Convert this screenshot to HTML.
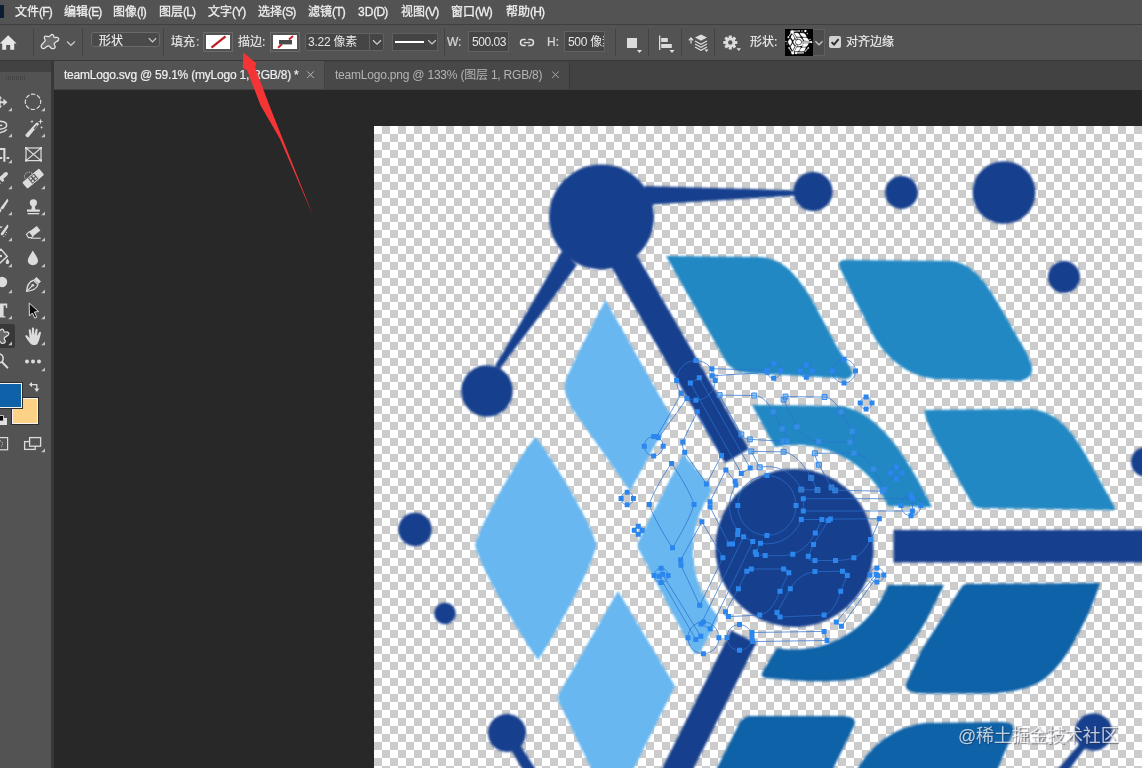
<!DOCTYPE html>
<html lang="zh-CN">
<head>
<meta charset="utf-8">
<title>teamLogo.svg @ 59.1% (myLogo 1, RGB/8) *</title>
<style>
*{box-sizing:border-box;margin:0;padding:0}
html,body{width:1142px;height:768px;overflow:hidden;background:#282828}
body{font-family:"Liberation Sans","Noto Sans CJK SC",sans-serif;font-size:12px;color:#dcdcdc}
#app{position:relative;width:1142px;height:768px;overflow:hidden;background:#282828}
#menubar,#tab1,#tab2,.lbl,.field{will-change:transform}
.abs{position:absolute}
/* menu bar */
#menubar{position:absolute;left:0;top:0;width:1142px;height:24px;background:#535353}
#menubar .mi{position:absolute;top:3.6px;height:16px;line-height:16px;white-space:nowrap;color:#f0f0f0;font-size:12px;-webkit-text-stroke:.3px #ececec}
#pslogo{position:absolute;left:0;top:5px;width:4px;height:13px;background:#0b1c33}
#menuline{position:absolute;left:0;top:24px;width:1142px;height:1px;background:#3f3f3f}
/* options bar */
#optbar{position:absolute;left:0;top:25px;width:1142px;height:35px;background:#535353}
#optline{position:absolute;left:0;top:60px;width:1142px;height:1px;background:#383838}
.vsep{position:absolute;top:29px;width:1px;height:27px;background:#424242}
.lbl{position:absolute;top:34px;height:16px;line-height:16px;white-space:nowrap;color:#e6e6e6;font-size:12px;-webkit-text-stroke:.2px #e0e0e0}
.field{position:absolute;background:#454545;border:1px solid #626262;color:#e6e6e6;font-size:12px;white-space:nowrap;overflow:hidden}
.swatch{position:absolute;border:1px solid #6a6a6a;background:#535353}
.swatch i{position:absolute;left:2px;top:2px;right:2px;bottom:2px;background:#fff;display:block}
/* tab bar */
#tabbar{position:absolute;left:0;top:61px;width:1142px;height:29px;background:#424242}
#tab1{position:absolute;left:54px;top:61px;width:270px;height:28px;background:#535353}
#tab2{position:absolute;left:325px;top:62px;width:244px;height:27px;background:#484848}
.tabtxt{position:absolute;top:6px;height:16px;line-height:16px;white-space:nowrap;font-size:12px;letter-spacing:-.21px}
#tab1 .tabtxt{color:#f0f0f0;-webkit-text-stroke:.2px #ececec}
#tab2 .tabtxt{color:#b4b4b4}
/* toolbar */
#tools{position:absolute;left:0;top:72px;width:51px;height:696px;background:#535353}
#toolsedge{position:absolute;left:51px;top:61px;width:3px;height:707px;background:#383838}
#toolshead{position:absolute;left:0;top:61px;width:51px;height:11px;background:#424242}
/* canvas */
#stage{position:absolute;left:0;top:0;width:1142px;height:768px;pointer-events:none}
#wm{position:absolute;left:958px;top:723.5px;font-size:18px;line-height:24px;color:rgba(255,255,255,.72);text-shadow:1px 1px 1px rgba(40,40,60,.55);white-space:nowrap;letter-spacing:-.2px}

#menubar .mi b.l{font-weight:normal;letter-spacing:-.85px}

</style>
</head>
<body>
<div id="app">
<div id="tabbar"></div>
<div id="menubar">
  <div id="pslogo"></div>
  <span class="mi" style="left:15px">文件<b class="l">(F)</b></span>
  <span class="mi" style="left:64px">编辑<b class="l">(E)</b></span>
  <span class="mi" style="left:113px">图像<b class="l">(I)</b></span>
  <span class="mi" style="left:159px">图层<b class="l">(L)</b></span>
  <span class="mi" style="left:208px">文字<b class="l">(Y)</b></span>
  <span class="mi" style="left:258px">选择<b class="l">(S)</b></span>
  <span class="mi" style="left:308px">滤镜<b class="l">(T)</b></span>
  <span class="mi" style="left:358px">3D<b class="l">(D)</b></span>
  <span class="mi" style="left:401px">视图<b class="l">(V)</b></span>
  <span class="mi" style="left:451px">窗口<b class="l">(W)</b></span>
  <span class="mi" style="left:506px">帮助<b class="l">(H)</b></span>
</div>
<div id="menuline"></div>
<div id="optbar"></div>
<div id="optline"></div>
<!-- home -->
<svg class="abs" style="left:0;top:34px" width="18" height="18" viewBox="0 0 18 18"><path d="M8.2 1.3 L16.6 9.4 H14.2 V15.8 H10.2 V11 H6.2 V15.8 H2.2 V9.4 H-0.2 Z" fill="#e6e6e6"/></svg>
<div class="vsep" style="left:33px"></div>
<!-- custom shape tool icon -->
<svg class="abs" style="left:40px;top:33px" width="20" height="18" viewBox="0 0 20 18"><path d="M10.9,2.1 Q12.1,0.9 12.9,1.8 Q13.8,2.6 13.9,3.7 Q14.0,4.8 15.7,4.4 Q17.4,4.0 18.2,4.9 Q19.1,5.7 18.6,6.9 Q18.0,8.0 16.3,8.8 Q14.6,9.6 14.3,10.5 Q14.0,11.4 14.8,12.5 Q15.6,13.6 15.1,14.5 Q14.6,15.4 13.4,15.6 Q12.2,15.9 11.3,15.2 Q10.4,14.6 9.8,13.6 Q9.2,12.6 8.1,12.8 Q7.0,13.0 6.0,14.2 Q5.0,15.4 3.8,15.6 Q2.6,15.7 1.8,14.8 Q0.9,13.8 1.2,12.7 Q1.6,11.6 2.8,10.5 Q4.0,9.4 4.8,8.4 Q5.6,7.4 5.0,6.5 Q4.4,5.6 4.3,4.7 Q4.2,3.8 5.0,3.3 Q5.8,2.9 6.9,3.3 Q8.0,3.8 8.8,3.6 Q9.6,3.4 10.9,2.1Z" fill="#6c6c6c" stroke="#e6e6e6" stroke-width="1.25" stroke-linejoin="round"/></svg>
<svg class="abs" style="left:66px;top:40px" width="10" height="7" viewBox="0 0 10 7"><path d="M1 1.5 L5 5.3 L9 1.5" fill="none" stroke="#c8c8c8" stroke-width="1.2"/></svg>
<div class="vsep" style="left:82px"></div>
<!-- mode dropdown -->
<div class="field" style="left:91px;top:32px;width:69px;height:15px;border-radius:3px;border-color:#6a6a6a;background:#4a4a4a"></div>
<span class="lbl" style="left:99px;top:32.5px;color:#f0f0f0">形状</span>
<svg class="abs" style="left:148px;top:37px" width="9" height="7" viewBox="0 0 9 7"><path d="M.8 1.2 L4.5 5 L8.2 1.2" fill="none" stroke="#d0d0d0" stroke-width="1.2"/></svg>
<div class="vsep" style="left:163px"></div>
<span class="lbl" style="left:171px">填充<span style="color:#9fc0e8;margin-left:1px">:</span></span>
<div class="swatch" style="left:203px;top:32px;width:30px;height:20px"><i></i>
  <svg class="abs" style="left:2px;top:2px" width="24" height="14" viewBox="0 0 24 14"><path d="M5.5 12.6 L19.5 1.4" stroke="#bd1f26" stroke-width="2.3" fill="none"/></svg></div>
<span class="lbl" style="left:238px">描边:</span>
<div class="swatch" style="left:270px;top:32px;width:30px;height:20px"><i></i>
  <svg class="abs" style="left:2px;top:2px" width="24" height="14" viewBox="0 0 24 14"><path d="M5 12.8 L9 9.2 M16 4.6 L20 1" stroke="#c8242c" stroke-width="2" fill="none"/><rect x="6" y="5" width="13" height="4.4" fill="#4a4a4a"/></svg></div>
<div class="field" style="left:305px;top:33px;width:65px;height:18px;border-radius:3px 0 0 3px;padding-left:2px;line-height:17px;letter-spacing:-.25px">3.22 像素</div>
<div class="field" style="left:369px;top:33px;width:15px;height:18px;border-radius:0 3px 3px 0"></div>
<svg class="abs" style="left:372px;top:39px" width="10" height="7" viewBox="0 0 10 7"><path d="M1 1.3 L5 5.2 L9 1.3" fill="none" stroke="#d0d0d0" stroke-width="1.2"/></svg>
<div class="field" style="left:392px;top:33px;width:46px;height:18px;border-color:#5e5e5e;background:#444"></div>
<div class="abs" style="left:395px;top:41px;width:29px;height:2px;background:#fff"></div>
<svg class="abs" style="left:427px;top:39px" width="10" height="7" viewBox="0 0 10 7"><path d="M1.2 1.3 L5 5 L8.8 1.3" fill="none" stroke="#d0d0d0" stroke-width="1.2"/></svg>
<div class="vsep" style="left:444px"></div>
<span class="lbl" style="left:447px;color:#d0d0d0">W:</span>
<div class="field" style="left:468px;top:31px;width:41px;height:21px;line-height:20px;padding-left:3px;letter-spacing:-.45px">500.03</div>
<svg class="abs" style="left:519px;top:37px" width="16" height="11" viewBox="0 0 16 11"><g fill="none" stroke="#e0e0e0" stroke-width="1.5"><path d="M6.7 2.6H4.5a3 3 0 0 0 0 6H6.7"/><path d="M9.3 2.6H11.5a3 3 0 0 1 0 6H9.3"/><path d="M4.8 5.6H11.2" stroke-width="1.3"/></g></svg>
<span class="lbl" style="left:547px;color:#d0d0d0">H:</span>
<div class="field" style="left:564px;top:31px;width:41px;height:21px;line-height:20px;padding-left:3px;letter-spacing:-.3px">500 像素</div>
<div class="vsep" style="left:615px"></div>
<div class="abs" style="left:627px;top:38px;width:10px;height:10px;background:#dcdcdc"></div>
<svg class="abs" style="left:637px;top:50px" width="5" height="3"><path d="M0 0H5L2.5 3Z" fill="#e0e0e0"/></svg>
<div class="vsep" style="left:648px"></div>
<svg class="abs" style="left:658px;top:35px" width="18" height="18" viewBox="0 0 18 18"><rect x="1" y="0.5" width="1.3" height="14.5" fill="#dcdcdc"/><rect x="3.2" y="3" width="6.6" height="4" fill="#dcdcdc"/><rect x="3.2" y="9" width="10.6" height="4" fill="#dcdcdc"/><path d="M11.5 15H16.5L14 18Z" fill="#e0e0e0"/></svg>
<div class="vsep" style="left:681px"></div>
<svg class="abs" style="left:688px;top:33px" width="22" height="20" viewBox="0 0 22 20"><path d="M3 5.2 V10.6 M.8 7.4 L3 5 L5.2 7.4" stroke="#dcdcdc" stroke-width="1.2" fill="none"/><path d="M13 1.4 L19 4.6 L13 7.8 L7 4.6 Z" fill="#dcdcdc"/><path d="M7 8 L13 11.2 L19 8 M7 11 L13 14.2 L19 11 M7 14 L13 17.2 L19 14" stroke="#dcdcdc" stroke-width="1.2" fill="none"/><path d="M16.5 16.6H20.5L18.5 19Z" fill="#e0e0e0"/></svg>
<div class="vsep" style="left:714px"></div>
<svg class="abs" style="left:722px;top:35px" width="20" height="18" viewBox="0 0 20 18"><g transform="translate(8.3 7.5)"><g fill="#dcdcdc"><rect x="-1.6" y="-7" width="3.2" height="14" rx=".6"/><rect x="-1.6" y="-7" width="3.2" height="14" rx=".6" transform="rotate(45)"/><rect x="-1.6" y="-7" width="3.2" height="14" rx=".6" transform="rotate(90)"/><rect x="-1.6" y="-7" width="3.2" height="14" rx=".6" transform="rotate(135)"/><circle r="5"/></g><circle r="2.2" fill="#535353"/></g><path d="M14.5 13.2H19L16.8 16Z" fill="#e0e0e0"/></svg>
<span class="lbl" style="left:750px;color:#f0f0f0">形状:</span>
<div class="abs" style="left:785px;top:29px;width:28px;height:27px;background:#000"></div>
<div class="abs" style="left:813px;top:29px;width:12px;height:27px;background:#4c4c4c;border:1px solid #606060;border-left:none"></div>
<svg class="abs" style="left:814px;top:40px" width="10" height="7" viewBox="0 0 10 7"><path d="M1.4 1.3 L5 4.8 L8.6 1.3" fill="none" stroke="#c4c4c4" stroke-width="1.2"/></svg>
<!-- mini logo in shape preview -->
<svg class="abs" style="left:785px;top:29px" width="28" height="27" viewBox="0 0 28 27"><g transform="matrix(0.0329 0 0 0.0312 -12.66 -4.00)" fill="#fff" stroke="#fff" stroke-width="10"><path d="M794.5,469.0 C838.1,469.0 873.5,504.4 873.5,548.0 C873.5,591.6 838.1,627.0 794.5,627.0 C750.9,627.0 715.5,591.6 715.5,548.0 C715.5,504.4 750.9,469.0 794.5,469.0 Z"/><path d="M601.5,164.6 C630.4,164.6 653.9,188.1 653.9,217 C653.9,245.9 630.4,269.4 601.5,269.4 C572.6,269.4 549.1,245.9 549.1,217 C549.1,188.1 572.6,164.6 601.5,164.6 Z"/><path d="M586.5,224.0 L724.9,463.0 L749.1,449.0 L610.7,210.0 Z"/><path d="M893.5,530 L1190,530 L1190,562.5 L893.5,562.5 Z"/><path d="M731.2,630.5 L615.5,861.7 L640.5,874.3 L756.3,643.0 Z"/><path d="M645,186 L796,190.4 L796,195.6 L645,205 Z"/><path d="M562,251 L577,265 C555,296 520,342 499.5,369 L495,365.5 C512,338 540,290 562,251 Z"/><path d="M813,172.1 C823.8,172.1 832.5,180.8 832.5,191.6 C832.5,202.4 823.8,211.1 813,211.1 C802.2,211.1 793.5,202.4 793.5,191.6 C793.5,180.8 802.2,172.1 813,172.1 Z"/><path d="M901.5,176.1 C910.6,176.1 917.9,183.4 917.9,192.5 C917.9,201.6 910.6,208.9 901.5,208.9 C892.4,208.9 885.1,201.6 885.1,192.5 C885.1,183.4 892.4,176.1 901.5,176.1 Z"/><path d="M1004,161.2 C1021.3,161.2 1035.3,175.2 1035.3,192.5 C1035.3,209.8 1021.3,223.8 1004,223.8 C986.7,223.8 972.7,209.8 972.7,192.5 C972.7,175.2 986.7,161.2 1004,161.2 Z"/><path d="M1064,261 C1072.8,261 1080,268.2 1080,277 C1080,285.8 1072.8,293 1064,293 C1055.2,293 1048,285.8 1048,277 C1048,268.2 1055.2,261 1064,261 Z"/><path d="M1146,447 C1154.3,447 1161,453.7 1161,462 C1161,470.3 1154.3,477 1146,477 C1137.7,477 1131,470.3 1131,462 C1131,453.7 1137.7,447 1146,447 Z"/><path d="M487,365.3 C501.2,365.3 512.7,376.8 512.7,391 C512.7,405.2 501.2,416.7 487,416.7 C472.8,416.7 461.3,405.2 461.3,391 C461.3,376.8 472.8,365.3 487,365.3 Z"/><path d="M415,512.8 C424.2,512.8 431.7,520.3 431.7,529.5 C431.7,538.7 424.2,546.2 415,546.2 C405.8,546.2 398.3,538.7 398.3,529.5 C398.3,520.3 405.8,512.8 415,512.8 Z"/><path d="M445,602.8 C450.9,602.8 455.7,607.6 455.7,613.5 C455.7,619.4 450.9,624.2 445,624.2 C439.1,624.2 434.3,619.4 434.3,613.5 C434.3,607.6 439.1,602.8 445,602.8 Z"/><path d="M507,714 C517.5,714 526,722.5 526,733 C526,743.5 517.5,752 507,752 C496.5,752 488,743.5 488,733 C488,722.5 496.5,714 507,714 Z"/><path d="M1093.5,713.25 C1103.9,713.25 1112.25,721.6 1112.25,732 C1112.25,742.4 1103.9,750.75 1093.5,750.75 C1083.1,750.75 1074.75,742.4 1074.75,732 C1074.75,721.6 1083.1,713.25 1093.5,713.25 Z"/><path d="M502.3,735.2 L601.2,902.2 L614.8,893.8 L510.7,730.0 Z"/><path d="M1091.4,730.3 L983.0,856.4 L997.0,867.6 L1095.6,733.7 Z"/><path d="M720,863 C738.8,863 754,878.2 754,897 C754,915.8 738.8,931 720,931 C701.2,931 686,915.8 686,897 C686,878.2 701.2,863 720,863 Z"/><path d="M754,884 L950,881 L958,905 L756,908 Z"/><path d="M622,856 C645.2,856 664,874.8 664,898 C664,921.2 645.2,940 622,940 C598.8,940 580,921.2 580,898 C580,874.8 598.8,856 622,856 Z"/><path d="M1186,521 C1200.9,521 1213,533.1 1213,548 C1213,562.9 1200.9,575 1186,575 C1171.1,575 1159,562.9 1159,548 C1159,533.1 1171.1,521 1186,521 Z"/><path d="M666,256 L760,257 C785,259 797,276 812,300 L836,345 C846,362 858,374 849,378 C845,380 842,378 838,378 L748,373 C736,372 730,368 725,360 Z"/><path d="M845,260 L951,261 C972,263 985,282 996,300 L1026,352 C1033,366 1037,377 1020,381 L935,379 C905,375 888,358 876,340 C866,322 850,290 840,268 C838,263 840,260 845,260 Z"/><path d="M752,405 L840,406 C870,410 895,440 915,475 L932,507 L888,506 A100,100 0 0 0 775,447 Z"/><path d="M925,410 L1031,409 C1058,412 1072,432 1084,452 L1114,506 C1116,510 1114,511 1110,510 L980,508 C975,508 973,505 970,500 L936,440 C930,428 924,416 925,410 Z"/><path d="M605.5,300 L671,416 L630,491 L571,407 C566,396 563,388 566,380 C571,366 590,330 605.5,300 Z"/><path d="M683,454 L708,484 C712,488 712,490 710,494 A100,100 0 0 0 716,614 C718,618 717,621 715,625 L701,650 C698,655 695,655 692,650 L640,552 C637,546 637,544 640,538 Z"/><path d="M535.5,437 C550,455 590,520 596.5,545 C590,572 555,634 538,660 C520,634 482,572 475,545 C482,520 520,455 535.5,437 Z"/><path d="M618,591 L675,686 L612,812 L561,706 C557,699 557,697 560,692 Z"/><path d="M888,585 L944,585 L926,621 C910,650 890,668 865,677 C845,682 815,682 790,680 L766,678 C761,677 761,675 763,671 L777,648 A100,100 0 0 0 888,585 Z"/><path d="M967,584 L1100,583 C1095,600 1085,622 1076,638 C1062,664 1048,680 1031,686 C1015,692 1000,693 981,693.5 L925,693.5 C910,693 903,690 907,682 L921,651 L961,588 C962,586 964,584 967,584 Z"/><path d="M752,716 L840,716 C852,716 857,719 854,726 L830,775 C815,810 800,834 775,838 L690,842 C680,842 678,836 682,829 L717,768 L740,722 C744,717 747,716 752,716 Z"/><path d="M925,723 L1000,722 C1012,722 1016,726 1013,733 L995,775 C985,808 970,832 950,838 L830,843 C820,843 818,837 822,831 L858,768 C870,748 890,728 925,723 Z"/></g></svg>
<!-- checkbox -->
<div class="abs" style="left:829px;top:36px;width:12px;height:12px;background:#d2d2d2;border-radius:2px"></div>
<svg class="abs" style="left:829px;top:36px" width="12" height="12" viewBox="0 0 12 12"><path d="M2.6 6.2 L5 8.6 L9.6 3.2" fill="none" stroke="#2a2a2a" stroke-width="1.9"/></svg>
<span class="lbl" style="left:846px;color:#f0f0f0">对齐边缘</span>
<!-- tabs -->
<div id="tab1"><span class="tabtxt" style="left:10px">teamLogo.svg @ 59.1% (myLogo 1, RGB/8) *</span>
  <svg class="abs" style="left:252px;top:9px" width="9" height="9" viewBox="0 0 9 9"><path d="M1.2 1.4L7.8 8M7.8 1.4L1.2 8" stroke="#b8b8b8" stroke-width="1"/></svg></div>
<div id="tab2"><span class="tabtxt" style="left:10px;top:5px">teamLogo.png @ 133% (图层 1, RGB/8)</span>
  <svg class="abs" style="left:226px;top:8px" width="9" height="9" viewBox="0 0 9 9"><path d="M1.2 1.4L7.8 8M7.8 1.4L1.2 8" stroke="#a8a8a8" stroke-width="1"/></svg></div>
<div class="abs" style="left:569px;top:62px;width:1px;height:27px;background:#383838"></div>

<div id="toolshead"></div>
<div id="tools"></div>
<div id="toolsedge"></div>
<svg class="abs" style="left:0;top:0" width="54" height="768" viewBox="0 0 54 768">
  <!-- grip -->
  <g fill="#454545"><rect x="6" y="76" width="1" height="4"/><rect x="8" y="76" width="1" height="4"/><rect x="10" y="76" width="1" height="4"/><rect x="12" y="76" width="1" height="4"/><rect x="14" y="76" width="1" height="4"/><rect x="16" y="76" width="1" height="4"/><rect x="18" y="76" width="1" height="4"/><rect x="20" y="76" width="1" height="4"/><rect x="22" y="76" width="1" height="4"/><rect x="24" y="76" width="1" height="4"/></g>
  <!-- selected tool bg -->
  <rect x="-2" y="324" width="17" height="24" rx="2" fill="#383838"/>
  <!-- corner flyout triangles -->
  <g fill="#c4c4c4">
    <path d="M45 107.5V111.3H41.2Z"/><path d="M45 133.5V137.3H41.2Z"/><path d="M45 185.5V189.3H41.2Z"/><path d="M45 211.5V215.3H41.2Z"/><path d="M45 237.5V241.3H41.2Z"/><path d="M45 263.5V267.3H41.2Z"/><path d="M45 289.5V293.3H41.2Z"/><path d="M45 315.5V319.3H41.2Z"/><path d="M45 341.5V345.3H41.2Z"/><path d="M45 367.5V371.3H41.2Z"/><path d="M45 448.5V452.3H41.2Z"/>
    <path d="M12 107.5V111.3H8.2Z"/><path d="M12 133.5V137.3H8.2Z"/><path d="M12 159.5V163.3H8.2Z"/><path d="M12 185.5V189.3H8.2Z"/><path d="M12 211.5V215.3H8.2Z"/><path d="M12 237.5V241.3H8.2Z"/><path d="M12 263.5V267.3H8.2Z"/><path d="M12 289.5V293.3H8.2Z"/><path d="M12 315.5V319.3H8.2Z"/><path d="M12 341.5V345.3H8.2Z"/>
  </g>
  <!-- ===== left column (clipped) ===== -->
  <g fill="#dcdcdc" stroke="none">
    <!-- move -->
    <path d="M-2 101.2H3.4V98.6L7.4 102.2L3.4 105.8V103.2H-2Z M-.2 95.6L2 98.6H.6V105.8H2L-.2 108.8L-2.4 105.8H-1V98.6H-2.4Z"/>
    <!-- crop -->
    <path d="M-3 148H5.4V161.8H3.3V150H-3Z M-3 157H2.2V159H-3Z M6.6 157H9.2V159H6.6Z"/>
    <!-- type T -->
    <path d="M-4 303.5H7.2V308H5.8V305.5H3.6V316.2H5.4V317.6H-2V316.2H0V305.5H-4Z"/>
  </g>
  <!-- lasso -->
  <g fill="none" stroke="#dcdcdc" stroke-width="1.5"><path d="M-3 121.6 C2 120.6 6.4 122 6.6 125 C6.8 128 2 129.6 -3 129.4"/><path d="M-3 125.4H2.2"/><path d="M-3 133.4 C1 132.8 5 131.4 6.8 129.4"/></g>
  <!-- eyedropper -->
  <g fill="#dcdcdc"><path d="M4.2 172.8 C5.4 171.6 7.2 171.8 7.8 173 C8.4 174.2 7.4 175.4 6.4 176.2 L3.2 179 L4.4 180.4 L2.6 182 L-3 177 L-1.2 175.4 L.4 176.6 Z"/><path d="M-4 180 L1 183 L-3 187.4Z"/></g>
  <!-- brush -->
  <path d="M7.4 198.8 C8.4 199.2 8.6 200.6 8 201.6 L3.4 208.8 C2.4 210 .2 208.8 .8 207.4 Z M.4 208.6 C1.6 209.6 1.8 211 .6 212 C-.8 213.2 -3 213 -4 212.6 L-4 208.6Z" fill="#dcdcdc"/>
  <!-- history brush -->
  <path d="M7.4 224.6 C8.4 225 8.6 226.4 8 227.4 L3.2 234.8 C2.2 236 .2 234.8 .8 233.4 Z M-4 226.8 L2.6 226.2 L1.6 227.8 L-4 228.4Z" fill="#dcdcdc"/>
  <g fill="#c8c8c8"><circle cx="6.4" cy="232.4" r=".6"/><circle cx="5.6" cy="234.6" r=".6"/><circle cx="3.8" cy="236.4" r=".6"/></g>
  <!-- paint bucket -->
  <g><path d="M-3 252.6 L1 249.2 L7.2 256.4 L-1 264 L-4 261" fill="none" stroke="#dcdcdc" stroke-width="1.5"/><circle cx=".8" cy="256" r="1.3" fill="#dcdcdc"/><path d="M7.4 258.6 C8.6 260.4 9.4 261.4 9.2 262.6 C9 263.8 7.8 264.4 6.8 264 C5.6 263.6 5.6 262 6 261 Z" fill="#dcdcdc"/></g>
  <!-- dodge -->
  <circle cx="2" cy="282" r="5.2" fill="#dcdcdc"/>
  <!-- custom shape (selected) -->
  <path d="M0.9,329.8 Q2.1,328.5 3.0,329.4 Q3.8,330.2 3.9,331.3 Q4.0,332.4 5.7,332.0 Q7.4,331.6 8.3,332.5 Q9.1,333.3 8.6,334.5 Q8.0,335.6 6.3,336.4 Q4.6,337.2 4.3,338.1 Q4.0,339.0 4.8,340.1 Q5.6,341.2 5.1,342.1 Q4.6,343.0 3.4,343.2 Q2.2,343.5 1.3,342.9 Q0.4,342.2 -0.2,341.2 Q-0.8,340.2 -1.9,340.4 Q-3.0,340.6 -4.0,341.8 Q-5.0,343.0 -6.2,343.1 Q-7.4,343.3 -8.2,342.4 Q-9.1,341.4 -8.7,340.3 Q-8.4,339.2 -7.2,338.1 Q-6.0,337.0 -5.2,336.0 Q-4.4,335.0 -5.0,334.1 Q-5.6,333.2 -5.7,332.3 Q-5.8,331.4 -5.0,331.0 Q-4.2,330.5 -3.1,331.0 Q-2.0,331.4 -1.2,331.2 Q-0.4,331.0 0.9,329.8Z" fill="#686868" stroke="#e0e0e0" stroke-width="1.25" stroke-linejoin="round"/>
  <!-- zoom -->
  <g fill="none" stroke="#dcdcdc"><circle cx="-1.4" cy="358.4" r="4.6" stroke-width="1.5"/><path d="M2.2 362.2 L7.4 367.6" stroke-width="2" stroke-linecap="round"/></g>
  <!-- ===== right column ===== -->
  <!-- elliptical marquee -->
  <circle cx="33" cy="101.8" r="7.7" fill="none" stroke="#dcdcdc" stroke-width="1.2" stroke-dasharray="4.4 1.65" stroke-dashoffset="2.2"/>
  <!-- magic wand -->
  <g fill="#dcdcdc"><path d="M36.2 122.8 C37.4 121.8 39.6 123.6 38.6 124.8 L28.6 137 C27.4 138.2 24.6 135.8 25.6 134.6 Z"/><path d="M36.4 125 L37.4 125.8 L34.6 129.2 L33.6 128.4Z" fill="#535353"/><path d="M32 119.6 L32.5 121.2 L34 121.6 L32.5 122 L32 123.6 L31.5 122 L30 121.6 L31.5 121.2Z"/><path d="M40.6 118.6 L41.3 120.9 L43.4 121.5 L41.3 122.1 L40.6 124.4 L39.9 122.1 L37.8 121.5 L39.9 120.9Z"/><path d="M41.6 125.6 L42 127 L43.4 127.4 L42 127.8 L41.6 129.2 L41.2 127.8 L39.8 127.4 L41.2 127Z"/></g>
  <!-- frame tool -->
  <g fill="none" stroke="#dcdcdc" stroke-width="1.2"><rect x="26" y="148" width="15" height="12.6"/><path d="M26 148 L41 160.6 M41 148 L26 160.6"/></g>
  <g fill="#dcdcdc"><rect x="25" y="147" width="2.2" height="2.2"/><rect x="39.8" y="147" width="2.2" height="2.2"/><rect x="25" y="159.4" width="2.2" height="2.2"/><rect x="39.8" y="159.4" width="2.2" height="2.2"/></g>
  <!-- healing brush (band-aid) -->
  <g transform="translate(33.2 178.6) rotate(-40)"><rect x="-11" y="-4.1" width="22" height="8.2" rx="1.3" fill="#dcdcdc"/><rect x="-4.3" y="-4.1" width="8.6" height="8.2" fill="#535353"/><rect x="-4.3" y="-3.7" width="8.6" height="7.4" fill="none" stroke="#dcdcdc" stroke-width=".9"/><g fill="#dcdcdc"><rect x="-2.9" y="-2.7" width="2.1" height="2.1"/><rect x=".8" y="-2.7" width="2.1" height="2.1"/><rect x="-2.9" y=".6" width="2.1" height="2.1"/><rect x=".8" y=".6" width="2.1" height="2.1"/></g></g>
  <path d="M25.2 178.6 A4.2 4.2 0 1 1 32.6 174.2" fill="none" stroke="#dcdcdc" stroke-width="1" stroke-dasharray="1 1.2"/>
  <rect x="26" y="176" width="8" height="6" fill="#535353" transform="rotate(-40 30 179)" opacity="0"/>
  <!-- clone stamp -->
  <g fill="#dcdcdc"><circle cx="33.4" cy="202.8" r="3.6"/><path d="M32 205 H34.8 L35.4 209.4 H39.8 V211.8 H27 V209.4 H31.4 Z"/><rect x="27.6" y="213" width="11.6" height="1.3"/></g>
  <!-- eraser -->
  <g><path d="M36.8 226 L40.4 230.6 L33 236.2 L29.4 231.6 Z" fill="#dcdcdc"/><path d="M29.4 231.6 L33 236.2 L31.4 237.6 H28.4 L26.4 234.4 Z" fill="none" stroke="#dcdcdc" stroke-width="1.1"/><path d="M31 238.2 H40.8" stroke="#dcdcdc" stroke-width="1.1"/></g>
  <!-- blur drop -->
  <path d="M32.8 250.4 C34.6 254 38 257.6 38 260.6 C38 263.4 35.8 265.2 32.8 265.2 C29.8 265.2 27.8 263.4 27.8 260.6 C27.8 257.6 31 254 32.8 250.4 Z" fill="#dcdcdc"/>
  <!-- pen -->
  <g><path d="M36.4 277 L41 281.4 L38.6 283.8 L34 279.4 Z" fill="#dcdcdc"/><path d="M33.6 280.2 L38 284.6 C36.8 288.6 32.8 290.6 26.6 291.4 C27 285.6 29.4 281.6 33.6 280.2 Z" fill="none" stroke="#dcdcdc" stroke-width="1.3" stroke-linejoin="round"/><path d="M26.8 291.2 L32.2 285.8" stroke="#dcdcdc" stroke-width="1.1"/><circle cx="32.8" cy="285.2" r="1.3" fill="#dcdcdc"/></g>
  <!-- path selection arrow -->
  <path d="M29.2 303 L38.6 311.6 L34.4 312 L36.8 317.2 L34.8 318.2 L32.4 313 L29.4 316 Z" fill="#0c0c0c" stroke="#dcdcdc" stroke-width="1" stroke-linejoin="round"/>
  <!-- hand -->
  <path d="M30.4 343.4 C28.6 341.6 26.4 338.4 25.4 336.6 C24.8 335.4 26.2 334.6 27.2 335.6 L29.6 338.2 L28.8 330.4 C28.7 329 30.5 328.8 30.8 330.2 L31.8 335.2 L31.9 328.6 C31.9 327.2 33.9 327.2 34 328.6 L34.4 335.2 L35.6 329.6 C35.9 328.3 37.7 328.6 37.6 330 L37 336 L39 332.4 C39.7 331.2 41.3 332 40.9 333.3 C40 336.4 39.6 340 37.6 343.4 C36.2 345.4 32.4 345.4 30.4 343.4 Z" fill="#dcdcdc"/>
  <!-- dots -->
  <g fill="#dcdcdc"><circle cx="27" cy="361.6" r="2"/><circle cx="33" cy="361.6" r="2"/><circle cx="39" cy="361.6" r="2"/></g>
  <!-- swap arrows -->
  <g fill="none" stroke="#dcdcdc" stroke-width="1.3"><path d="M30.4 384.6 H36.8 V390"/></g>
  <path d="M29 384.6 L32 382 V387.2Z M36.8 392 L34.2 388.6 H39.4Z" fill="#dcdcdc"/>
  <!-- background swatch -->
  <rect x="12.5" y="398.5" width="25" height="25" fill="#fdd287" stroke="#f4f4f4" stroke-width="1"/>
  <rect x="11.5" y="397.5" width="27" height="27" fill="none" stroke="#2e2e2e" stroke-width="1"/>
  <!-- foreground swatch -->
  <rect x="-3.5" y="383.5" width="25" height="24" fill="#0f62a8" stroke="#f4f4f4" stroke-width="1"/>
  <rect x="-4.5" y="382.5" width="27" height="26" fill="none" stroke="#2e2e2e" stroke-width="1"/>
  <!-- default colors mini -->
  <rect x="-2" y="418" width="9" height="7" fill="#e0e0e0"/><rect x="-3" y="415.6" width="6.4" height="5.4" fill="#0a0a0a" stroke="#e0e0e0" stroke-width=".8"/>
  <!-- quick mask -->
  <rect x="-3" y="437.6" width="10.6" height="12.2" fill="none" stroke="#dcdcdc" stroke-width="1.2"/><circle cx="-.6" cy="443.8" r="3.2" fill="none" stroke="#dcdcdc" stroke-width="1" stroke-dasharray="1 1.2"/>
  <!-- screen mode -->
  <g fill="#535353" stroke="#dcdcdc" stroke-width="1.3"><rect x="24.6" y="441.6" width="10.6" height="7.8"/><rect x="29.6" y="437.6" width="11" height="8.6"/></g>
</svg>

<svg id="stage" width="1142" height="768" viewBox="0 0 1142 768">
<defs><pattern id="chk" x="374" y="126" width="16" height="16" patternUnits="userSpaceOnUse"><rect width="16" height="16" fill="#fff"/><rect x="8" width="8" height="8" fill="#ccc"/><rect y="8" width="8" height="8" fill="#ccc"/></pattern><clipPath id="cv"><rect x="374" y="126" width="768" height="642"/></clipPath><filter id="soft" x="-2%" y="-2%" width="104%" height="104%"><feGaussianBlur stdDeviation="1.15"/></filter></defs>
<rect x="374" y="126" width="768" height="642" fill="url(#chk)"/>
<g clip-path="url(#cv)"><g filter="url(#soft)">
<path d="M794.5,469.0 C838.1,469.0 873.5,504.4 873.5,548.0 C873.5,591.6 838.1,627.0 794.5,627.0 C750.9,627.0 715.5,591.6 715.5,548.0 C715.5,504.4 750.9,469.0 794.5,469.0 Z" fill="#173f8e"/>
<path d="M601.5,164.6 C630.4,164.6 653.9,188.1 653.9,217 C653.9,245.9 630.4,269.4 601.5,269.4 C572.6,269.4 549.1,245.9 549.1,217 C549.1,188.1 572.6,164.6 601.5,164.6 Z" fill="#173f8e"/>
<path d="M586.5,224.0 L724.9,463.0 L749.1,449.0 L610.7,210.0 Z" fill="#173f8e"/>
<path d="M893.5,530 L1190,530 L1190,562.5 L893.5,562.5 Z" fill="#173f8e"/>
<path d="M731.2,630.5 L615.5,861.7 L640.5,874.3 L756.3,643.0 Z" fill="#173f8e"/>
<path d="M645,186 L796,190.4 L796,195.6 L645,205 Z" fill="#173f8e"/>
<path d="M562,251 L577,265 C555,296 520,342 499.5,369 L495,365.5 C512,338 540,290 562,251 Z" fill="#173f8e"/>
<path d="M813,172.1 C823.8,172.1 832.5,180.8 832.5,191.6 C832.5,202.4 823.8,211.1 813,211.1 C802.2,211.1 793.5,202.4 793.5,191.6 C793.5,180.8 802.2,172.1 813,172.1 Z" fill="#173f8e"/>
<path d="M901.5,176.1 C910.6,176.1 917.9,183.4 917.9,192.5 C917.9,201.6 910.6,208.9 901.5,208.9 C892.4,208.9 885.1,201.6 885.1,192.5 C885.1,183.4 892.4,176.1 901.5,176.1 Z" fill="#173f8e"/>
<path d="M1004,161.2 C1021.3,161.2 1035.3,175.2 1035.3,192.5 C1035.3,209.8 1021.3,223.8 1004,223.8 C986.7,223.8 972.7,209.8 972.7,192.5 C972.7,175.2 986.7,161.2 1004,161.2 Z" fill="#173f8e"/>
<path d="M1064,261 C1072.8,261 1080,268.2 1080,277 C1080,285.8 1072.8,293 1064,293 C1055.2,293 1048,285.8 1048,277 C1048,268.2 1055.2,261 1064,261 Z" fill="#173f8e"/>
<path d="M1146,447 C1154.3,447 1161,453.7 1161,462 C1161,470.3 1154.3,477 1146,477 C1137.7,477 1131,470.3 1131,462 C1131,453.7 1137.7,447 1146,447 Z" fill="#173f8e"/>
<path d="M487,365.3 C501.2,365.3 512.7,376.8 512.7,391 C512.7,405.2 501.2,416.7 487,416.7 C472.8,416.7 461.3,405.2 461.3,391 C461.3,376.8 472.8,365.3 487,365.3 Z" fill="#173f8e"/>
<path d="M415,512.8 C424.2,512.8 431.7,520.3 431.7,529.5 C431.7,538.7 424.2,546.2 415,546.2 C405.8,546.2 398.3,538.7 398.3,529.5 C398.3,520.3 405.8,512.8 415,512.8 Z" fill="#173f8e"/>
<path d="M445,602.8 C450.9,602.8 455.7,607.6 455.7,613.5 C455.7,619.4 450.9,624.2 445,624.2 C439.1,624.2 434.3,619.4 434.3,613.5 C434.3,607.6 439.1,602.8 445,602.8 Z" fill="#173f8e"/>
<path d="M507,714 C517.5,714 526,722.5 526,733 C526,743.5 517.5,752 507,752 C496.5,752 488,743.5 488,733 C488,722.5 496.5,714 507,714 Z" fill="#173f8e"/>
<path d="M1093.5,713.25 C1103.9,713.25 1112.25,721.6 1112.25,732 C1112.25,742.4 1103.9,750.75 1093.5,750.75 C1083.1,750.75 1074.75,742.4 1074.75,732 C1074.75,721.6 1083.1,713.25 1093.5,713.25 Z" fill="#173f8e"/>
<path d="M502.3,735.2 L601.2,902.2 L614.8,893.8 L510.7,730.0 Z" fill="#173f8e"/>
<path d="M1091.4,730.3 L983.0,856.4 L997.0,867.6 L1095.6,733.7 Z" fill="#173f8e"/>
<path d="M720,863 C738.8,863 754,878.2 754,897 C754,915.8 738.8,931 720,931 C701.2,931 686,915.8 686,897 C686,878.2 701.2,863 720,863 Z" fill="#173f8e"/>
<path d="M754,884 L950,881 L958,905 L756,908 Z" fill="#173f8e"/>
<path d="M622,856 C645.2,856 664,874.8 664,898 C664,921.2 645.2,940 622,940 C598.8,940 580,921.2 580,898 C580,874.8 598.8,856 622,856 Z" fill="#173f8e"/>
<path d="M1186,521 C1200.9,521 1213,533.1 1213,548 C1213,562.9 1200.9,575 1186,575 C1171.1,575 1159,562.9 1159,548 C1159,533.1 1171.1,521 1186,521 Z" fill="#173f8e"/>
<path d="M666,256 L760,257 C785,259 797,276 812,300 L836,345 C846,362 858,374 849,378 C845,380 842,378 838,378 L748,373 C736,372 730,368 725,360 Z" fill="#2088c4"/>
<path d="M845,260 L951,261 C972,263 985,282 996,300 L1026,352 C1033,366 1037,377 1020,381 L935,379 C905,375 888,358 876,340 C866,322 850,290 840,268 C838,263 840,260 845,260 Z" fill="#2088c4"/>
<path d="M752,405 L840,406 C870,410 895,440 915,475 L932,507 L888,506 A100,100 0 0 0 775,447 Z" fill="#2088c4"/>
<path d="M925,410 L1031,409 C1058,412 1072,432 1084,452 L1114,506 C1116,510 1114,511 1110,510 L980,508 C975,508 973,505 970,500 L936,440 C930,428 924,416 925,410 Z" fill="#2088c4"/>
<path d="M605.5,300 L671,416 L630,491 L571,407 C566,396 563,388 566,380 C571,366 590,330 605.5,300 Z" fill="#67b7f0"/>
<path d="M683,454 L708,484 C712,488 712,490 710,494 A100,100 0 0 0 716,614 C718,618 717,621 715,625 L701,650 C698,655 695,655 692,650 L640,552 C637,546 637,544 640,538 Z" fill="#67b7f0"/>
<path d="M535.5,437 C550,455 590,520 596.5,545 C590,572 555,634 538,660 C520,634 482,572 475,545 C482,520 520,455 535.5,437 Z" fill="#67b7f0"/>
<path d="M618,591 L675,686 L612,812 L561,706 C557,699 557,697 560,692 Z" fill="#67b7f0"/>
<path d="M888,585 L944,585 L926,621 C910,650 890,668 865,677 C845,682 815,682 790,680 L766,678 C761,677 761,675 763,671 L777,648 A100,100 0 0 0 888,585 Z" fill="#1062a8"/>
<path d="M967,584 L1100,583 C1095,600 1085,622 1076,638 C1062,664 1048,680 1031,686 C1015,692 1000,693 981,693.5 L925,693.5 C910,693 903,690 907,682 L921,651 L961,588 C962,586 964,584 967,584 Z" fill="#1062a8"/>
<path d="M752,716 L840,716 C852,716 857,719 854,726 L830,775 C815,810 800,834 775,838 L690,842 C680,842 678,836 682,829 L717,768 L740,722 C744,717 747,716 752,716 Z" fill="#1062a8"/>
<path d="M925,723 L1000,722 C1012,722 1016,726 1013,733 L995,775 C985,808 970,832 950,838 L830,843 C820,843 818,837 822,831 L858,768 C870,748 890,728 925,723 Z" fill="#1062a8"/>
</g>
<g transform="matrix(0.368 0 0 0.378 474.52 298.36)" fill="none" stroke="#2a6fd0" stroke-width="0.8" stroke-opacity=".9">
<path d="M794.5,469.0 C838.1,469.0 873.5,504.4 873.5,548.0 C873.5,591.6 838.1,627.0 794.5,627.0 C750.9,627.0 715.5,591.6 715.5,548.0 C715.5,504.4 750.9,469.0 794.5,469.0 Z" vector-effect="non-scaling-stroke"/>
<path d="M601.5,164.6 C630.4,164.6 653.9,188.1 653.9,217 C653.9,245.9 630.4,269.4 601.5,269.4 C572.6,269.4 549.1,245.9 549.1,217 C549.1,188.1 572.6,164.6 601.5,164.6 Z" vector-effect="non-scaling-stroke"/>
<path d="M586.5,224.0 L724.9,463.0 L749.1,449.0 L610.7,210.0 Z" vector-effect="non-scaling-stroke"/>
<path d="M893.5,530 L1190,530 L1190,562.5 L893.5,562.5 Z" vector-effect="non-scaling-stroke"/>
<path d="M731.2,630.5 L615.5,861.7 L640.5,874.3 L756.3,643.0 Z" vector-effect="non-scaling-stroke"/>
<path d="M645,186 L796,190.4 L796,195.6 L645,205 Z" vector-effect="non-scaling-stroke"/>
<path d="M562,251 L577,265 C555,296 520,342 499.5,369 L495,365.5 C512,338 540,290 562,251 Z" vector-effect="non-scaling-stroke"/>
<path d="M813,172.1 C823.8,172.1 832.5,180.8 832.5,191.6 C832.5,202.4 823.8,211.1 813,211.1 C802.2,211.1 793.5,202.4 793.5,191.6 C793.5,180.8 802.2,172.1 813,172.1 Z" vector-effect="non-scaling-stroke"/>
<path d="M901.5,176.1 C910.6,176.1 917.9,183.4 917.9,192.5 C917.9,201.6 910.6,208.9 901.5,208.9 C892.4,208.9 885.1,201.6 885.1,192.5 C885.1,183.4 892.4,176.1 901.5,176.1 Z" vector-effect="non-scaling-stroke"/>
<path d="M1004,161.2 C1021.3,161.2 1035.3,175.2 1035.3,192.5 C1035.3,209.8 1021.3,223.8 1004,223.8 C986.7,223.8 972.7,209.8 972.7,192.5 C972.7,175.2 986.7,161.2 1004,161.2 Z" vector-effect="non-scaling-stroke"/>
<path d="M1064,261 C1072.8,261 1080,268.2 1080,277 C1080,285.8 1072.8,293 1064,293 C1055.2,293 1048,285.8 1048,277 C1048,268.2 1055.2,261 1064,261 Z" vector-effect="non-scaling-stroke"/>
<path d="M1146,447 C1154.3,447 1161,453.7 1161,462 C1161,470.3 1154.3,477 1146,477 C1137.7,477 1131,470.3 1131,462 C1131,453.7 1137.7,447 1146,447 Z" vector-effect="non-scaling-stroke"/>
<path d="M487,365.3 C501.2,365.3 512.7,376.8 512.7,391 C512.7,405.2 501.2,416.7 487,416.7 C472.8,416.7 461.3,405.2 461.3,391 C461.3,376.8 472.8,365.3 487,365.3 Z" vector-effect="non-scaling-stroke"/>
<path d="M415,512.8 C424.2,512.8 431.7,520.3 431.7,529.5 C431.7,538.7 424.2,546.2 415,546.2 C405.8,546.2 398.3,538.7 398.3,529.5 C398.3,520.3 405.8,512.8 415,512.8 Z" vector-effect="non-scaling-stroke"/>
<path d="M445,602.8 C450.9,602.8 455.7,607.6 455.7,613.5 C455.7,619.4 450.9,624.2 445,624.2 C439.1,624.2 434.3,619.4 434.3,613.5 C434.3,607.6 439.1,602.8 445,602.8 Z" vector-effect="non-scaling-stroke"/>
<path d="M507,714 C517.5,714 526,722.5 526,733 C526,743.5 517.5,752 507,752 C496.5,752 488,743.5 488,733 C488,722.5 496.5,714 507,714 Z" vector-effect="non-scaling-stroke"/>
<path d="M1093.5,713.25 C1103.9,713.25 1112.25,721.6 1112.25,732 C1112.25,742.4 1103.9,750.75 1093.5,750.75 C1083.1,750.75 1074.75,742.4 1074.75,732 C1074.75,721.6 1083.1,713.25 1093.5,713.25 Z" vector-effect="non-scaling-stroke"/>
<path d="M502.3,735.2 L601.2,902.2 L614.8,893.8 L510.7,730.0 Z" vector-effect="non-scaling-stroke"/>
<path d="M1091.4,730.3 L983.0,856.4 L997.0,867.6 L1095.6,733.7 Z" vector-effect="non-scaling-stroke"/>
<path d="M720,863 C738.8,863 754,878.2 754,897 C754,915.8 738.8,931 720,931 C701.2,931 686,915.8 686,897 C686,878.2 701.2,863 720,863 Z" vector-effect="non-scaling-stroke"/>
<path d="M754,884 L950,881 L958,905 L756,908 Z" vector-effect="non-scaling-stroke"/>
<path d="M622,856 C645.2,856 664,874.8 664,898 C664,921.2 645.2,940 622,940 C598.8,940 580,921.2 580,898 C580,874.8 598.8,856 622,856 Z" vector-effect="non-scaling-stroke"/>
<path d="M1186,521 C1200.9,521 1213,533.1 1213,548 C1213,562.9 1200.9,575 1186,575 C1171.1,575 1159,562.9 1159,548 C1159,533.1 1171.1,521 1186,521 Z" vector-effect="non-scaling-stroke"/>
<path d="M666,256 L760,257 C785,259 797,276 812,300 L836,345 C846,362 858,374 849,378 C845,380 842,378 838,378 L748,373 C736,372 730,368 725,360 Z" vector-effect="non-scaling-stroke"/>
<path d="M845,260 L951,261 C972,263 985,282 996,300 L1026,352 C1033,366 1037,377 1020,381 L935,379 C905,375 888,358 876,340 C866,322 850,290 840,268 C838,263 840,260 845,260 Z" vector-effect="non-scaling-stroke"/>
<path d="M752,405 L840,406 C870,410 895,440 915,475 L932,507 L888,506 A100,100 0 0 0 775,447 Z" vector-effect="non-scaling-stroke"/>
<path d="M925,410 L1031,409 C1058,412 1072,432 1084,452 L1114,506 C1116,510 1114,511 1110,510 L980,508 C975,508 973,505 970,500 L936,440 C930,428 924,416 925,410 Z" vector-effect="non-scaling-stroke"/>
<path d="M605.5,300 L671,416 L630,491 L571,407 C566,396 563,388 566,380 C571,366 590,330 605.5,300 Z" vector-effect="non-scaling-stroke"/>
<path d="M683,454 L708,484 C712,488 712,490 710,494 A100,100 0 0 0 716,614 C718,618 717,621 715,625 L701,650 C698,655 695,655 692,650 L640,552 C637,546 637,544 640,538 Z" vector-effect="non-scaling-stroke"/>
<path d="M535.5,437 C550,455 590,520 596.5,545 C590,572 555,634 538,660 C520,634 482,572 475,545 C482,520 520,455 535.5,437 Z" vector-effect="non-scaling-stroke"/>
<path d="M618,591 L675,686 L612,812 L561,706 C557,699 557,697 560,692 Z" vector-effect="non-scaling-stroke"/>
<path d="M888,585 L944,585 L926,621 C910,650 890,668 865,677 C845,682 815,682 790,680 L766,678 C761,677 761,675 763,671 L777,648 A100,100 0 0 0 888,585 Z" vector-effect="non-scaling-stroke"/>
<path d="M967,584 L1100,583 C1095,600 1085,622 1076,638 C1062,664 1048,680 1031,686 C1015,692 1000,693 981,693.5 L925,693.5 C910,693 903,690 907,682 L921,651 L961,588 C962,586 964,584 967,584 Z" vector-effect="non-scaling-stroke"/>
<path d="M752,716 L840,716 C852,716 857,719 854,726 L830,775 C815,810 800,834 775,838 L690,842 C680,842 678,836 682,829 L717,768 L740,722 C744,717 747,716 752,716 Z" vector-effect="non-scaling-stroke"/>
<path d="M925,723 L1000,722 C1012,722 1016,726 1013,733 L995,775 C985,808 970,832 950,838 L830,843 C820,843 818,837 822,831 L858,768 C870,748 890,728 925,723 Z" vector-effect="non-scaling-stroke"/>
</g>
<path d="M717.1,392.6h5v5h-5zM751.7,393.0h5v5h-5zM770.8,409.3h5v5h-5zM779.7,426.3h5v5h-5zM784.5,438.7h5v5h-5zM780.4,438.7h5v5h-5zM747.3,436.9h5v5h-5zM738.8,431.9h5v5h-5zM783.0,394.1h5v5h-5zM822.0,394.5h5v5h-5zM838.6,409.3h5v5h-5zM849.6,428.9h5v5h-5zM847.4,439.9h5v5h-5zM816.1,439.1h5v5h-5zM794.4,424.4h5v5h-5zM781.1,397.2h5v5h-5zM748.8,448.9h5v5h-5zM781.1,449.3h5v5h-5zM808.7,475.4h5v5h-5zM815.0,487.5h5v5h-5zM798.8,487.1h5v5h-5zM757.2,464.8h5v5h-5zM812.4,450.8h5v5h-5zM851.4,450.5h5v5h-5zM870.9,466.7h5v5h-5zM882.0,487.1h5v5h-5zM880.5,488.6h5v5h-5zM832.7,487.9h5v5h-5zM829.0,484.9h5v5h-5zM816.5,462.2h5v5h-5z" fill="#4a9bea" fill-opacity=".55" stroke="#2b86ee" stroke-width=".9"/>
<path d="M764.4,473.1h5v5h-5zM793.5,503.0h5v5h-5zM764.4,532.9h5v5h-5zM735.3,503.0h5v5h-5zM693.4,358.1h5v5h-5zM712.7,377.9h5v5h-5zM693.4,397.7h5v5h-5zM674.1,377.9h5v5h-5zM687.9,380.5h5v5h-5zM738.8,470.9h5v5h-5zM747.7,465.6h5v5h-5zM696.8,375.2h5v5h-5zM800.8,496.2h5v5h-5zM909.9,496.2h5v5h-5zM909.9,508.5h5v5h-5zM800.8,508.5h5v5h-5zM741.1,534.2h5v5h-5zM698.5,621.6h5v5h-5zM707.7,626.3h5v5h-5zM750.3,538.9h5v5h-5zM709.4,366.2h5v5h-5zM765.0,367.8h5v5h-5zM765.0,369.8h5v5h-5zM709.4,373.3h5v5h-5zM678.8,390.7h5v5h-5zM684.4,396.0h5v5h-5zM655.8,435.3h5v5h-5zM654.2,434.0h5v5h-5zM771.2,360.9h5v5h-5zM778.4,368.3h5v5h-5zM771.2,375.7h5v5h-5zM764.0,368.3h5v5h-5zM803.8,362.4h5v5h-5zM809.8,368.6h5v5h-5zM803.8,374.8h5v5h-5zM797.7,368.6h5v5h-5zM841.5,356.8h5v5h-5zM853.0,368.6h5v5h-5zM841.5,380.5h5v5h-5zM830.0,368.6h5v5h-5zM863.6,394.5h5v5h-5zM869.5,400.6h5v5h-5zM863.6,406.6h5v5h-5zM857.7,400.6h5v5h-5zM893.8,464.8h5v5h-5zM899.3,470.5h5v5h-5zM893.8,476.2h5v5h-5zM888.2,470.5h5v5h-5zM651.2,433.9h5v5h-5zM660.7,443.7h5v5h-5zM651.2,453.4h5v5h-5zM641.8,443.7h5v5h-5zM624.7,489.7h5v5h-5zM630.9,496.0h5v5h-5zM624.7,502.3h5v5h-5zM618.6,496.0h5v5h-5zM635.8,523.7h5v5h-5zM639.7,527.8h5v5h-5zM635.8,531.8h5v5h-5zM631.8,527.8h5v5h-5zM658.6,565.7h5v5h-5zM665.6,572.9h5v5h-5zM658.6,580.1h5v5h-5zM651.6,572.9h5v5h-5zM874.4,565.5h5v5h-5zM881.3,572.6h5v5h-5zM874.4,579.6h5v5h-5zM867.5,572.6h5v5h-5zM656.9,573.8h5v5h-5zM693.3,636.9h5v5h-5zM698.3,633.7h5v5h-5zM660.0,571.8h5v5h-5zM873.7,571.9h5v5h-5zM833.8,619.6h5v5h-5zM838.9,623.8h5v5h-5zM875.2,573.2h5v5h-5zM737.0,622.1h5v5h-5zM749.5,634.9h5v5h-5zM737.0,647.8h5v5h-5zM724.5,634.9h5v5h-5zM749.5,630.0h5v5h-5zM821.6,628.9h5v5h-5zM824.6,637.9h5v5h-5zM750.2,639.1h5v5h-5zM700.9,619.4h5v5h-5zM716.4,635.3h5v5h-5zM700.9,651.2h5v5h-5zM685.5,635.3h5v5h-5zM908.5,492.8h5v5h-5zM918.4,503.0h5v5h-5zM908.5,513.2h5v5h-5zM898.5,503.0h5v5h-5zM694.8,409.3h5v5h-5zM719.0,453.1h5v5h-5zM703.9,481.5h5v5h-5zM682.2,449.7h5v5h-5zM680.3,439.5h5v5h-5zM723.4,467.5h5v5h-5zM732.6,478.8h5v5h-5zM733.3,482.6h5v5h-5zM735.5,527.9h5v5h-5zM735.1,532.1h5v5h-5zM730.0,541.6h5v5h-5zM726.7,541.6h5v5h-5zM707.5,504.5h5v5h-5zM707.5,499.2h5v5h-5zM669.1,461.0h5v5h-5zM691.5,501.9h5v5h-5zM670.0,545.3h5v5h-5zM646.8,501.9h5v5h-5zM699.4,519.3h5v5h-5zM720.4,555.2h5v5h-5zM697.2,602.8h5v5h-5zM678.5,562.7h5v5h-5zM678.1,557.4h5v5h-5zM798.8,517.0h5v5h-5zM819.4,517.0h5v5h-5zM812.8,530.6h5v5h-5zM790.3,551.8h5v5h-5zM762.7,552.9h5v5h-5zM753.9,552.1h5v5h-5zM752.8,549.5h5v5h-5zM758.0,540.8h5v5h-5zM827.9,516.6h5v5h-5zM876.8,516.2h5v5h-5zM868.0,537.0h5v5h-5zM851.4,555.2h5v5h-5zM833.0,558.0h5v5h-5zM812.4,558.0h5v5h-5zM805.8,553.7h5v5h-5zM811.0,541.9h5v5h-5zM825.7,518.1h5v5h-5zM748.8,566.5h5v5h-5zM781.1,566.5h5v5h-5zM786.3,570.3h5v5h-5zM777.5,588.8h5v5h-5zM757.2,612.6h5v5h-5zM725.9,614.1h5v5h-5zM723.0,609.2h5v5h-5zM735.9,586.2h5v5h-5zM744.3,568.8h5v5h-5zM812.4,569.1h5v5h-5zM840.0,568.8h5v5h-5zM844.8,572.9h5v5h-5zM838.2,588.8h5v5h-5zM821.6,612.6h5v5h-5zM777.5,614.5h5v5h-5zM774.5,610.0h5v5h-5zM787.8,586.2h5v5h-5z" fill="#2b86ee"/>
</g>
<path d="M243.4,52.4 L256.6,63.6 L255,67.2 L269.2,105 L291,160 L313.2,216 L280,139 L260.4,105 L247.2,70.4 L242.8,67.8 Z" fill="#f53535"/>
</svg>
<div id="wm">@稀土掘金技术社区</div>
</div>
</body>
</html>
